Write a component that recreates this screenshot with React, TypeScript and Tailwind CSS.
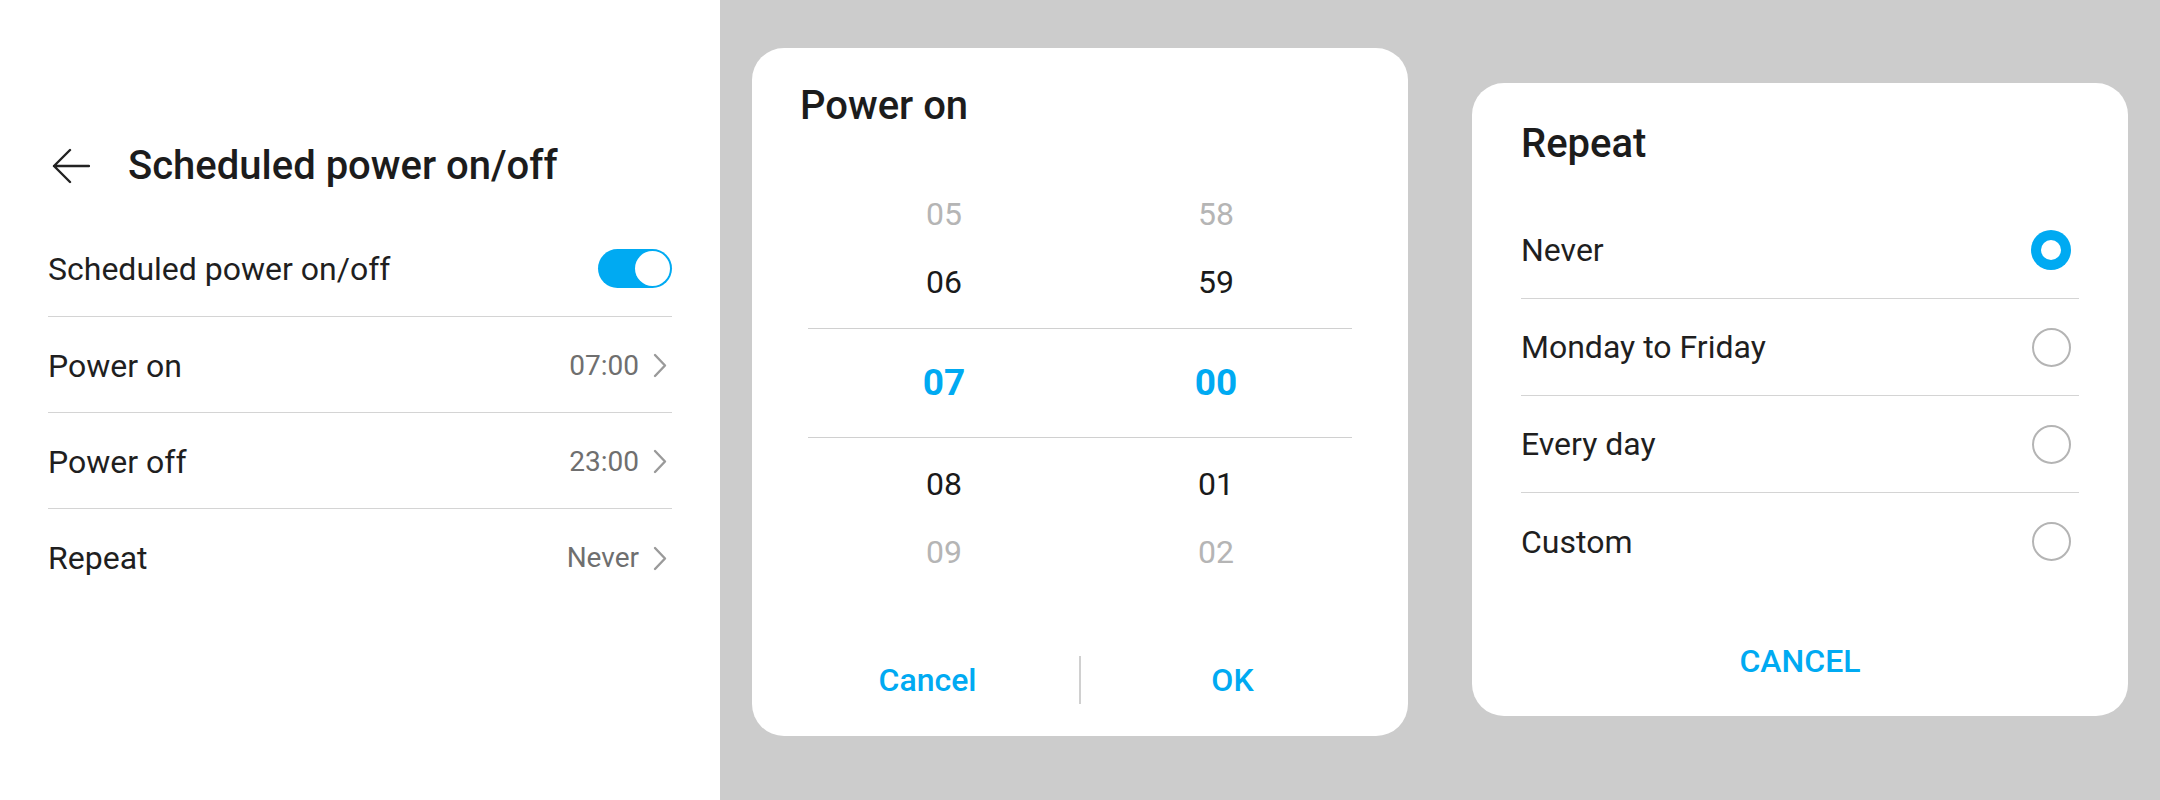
import React from "react";

const BLUE = "text-[#00aaf2]";

function Chevron() {
  return (
    <svg width="14" height="25" viewBox="0 0 14 25" className="ml-[14px] mr-[5px]">
      <path d="M2 2 L12 12.5 L2 23" fill="none" stroke="#9a9a9a" strokeWidth="2.4" strokeLinecap="round" strokeLinejoin="round" />
    </svg>
  );
}

function SettingRow({ label, value, last }: { label: string; value?: string; last?: boolean }) {
  return (
    <div className={`flex items-center h-[96px] ${last ? "" : "border-b border-[#d4d4d4]"}`}>
      <span className="text-[32px] text-[#1f1f1f] flex-1 pt-[2px]">{label}</span>
      {value !== undefined && (
        <div className="flex items-center pt-[2px]">
          <span className="text-[28px] text-[#6f6f6f]">{value}</span>
          <Chevron />
        </div>
      )}
    </div>
  );
}

function PickerRow({ h, m, tone }: { h: string; m: string; tone: "faded" | "normal" }) {
  const c = tone === "faded" ? "text-[#b5b5b5]" : "text-[#1a1a1a]";
  return (
    <div className={`flex h-[68px] items-center text-[32px] leading-[68px] ${c}`}>
      <div className="flex-1 text-center">{h}</div>
      <div className="flex-1 text-center">{m}</div>
    </div>
  );
}

function Radio({ selected }: { selected?: boolean }) {
  if (selected) {
    return (
      <div className="w-[40px] h-[40px] rounded-full bg-[#00aaf2] flex items-center justify-center mr-[8px]">
        <div className="w-[20px] h-[20px] rounded-full bg-white" />
      </div>
    );
  }
  return <div className="w-[39px] h-[39px] rounded-full border-[2px] border-[#b4b4b4] mr-[8px]" />;
}

function OptionRow({ label, selected, last }: { label: string; selected?: boolean; last?: boolean }) {
  return (
    <div className={`flex items-center h-[97px] ${last ? "" : "border-b border-[#d4d4d4]"}`}>
      <span className="flex-1 text-[32px] text-[#1f1f1f]">{label}</span>
      <Radio selected={selected} />
    </div>
  );
}

export default function App() {
  return (
    <div className="flex w-[2160px] h-[800px] font-['Roboto',sans-serif] overflow-hidden">
      {/* Left settings panel */}
      <div className="w-[720px] h-full bg-white px-[48px] pt-[142px]">
        <div className="flex items-center h-[48px]">
          <svg width="38" height="36" viewBox="0 0 38 36" className="ml-[4px]">
            <path d="M37 18 H2 M18 2 L2 18 L18 34" fill="none" stroke="#222" strokeWidth="2.4" strokeLinecap="round" strokeLinejoin="round" />
          </svg>
          <h1 className="ml-[38px] text-[40px] font-medium text-[#1c1c1c] leading-[48px]">Scheduled power on/off</h1>
        </div>
        <div className="mt-[31px]">
          <div className="flex items-center h-[96px] border-b border-[#d4d4d4]">
            <span className="text-[32px] text-[#1f1f1f] flex-1">Scheduled power on/off</span>
            <div className="w-[74px] h-[39px] rounded-full bg-[#00aaf2] flex items-center justify-end px-[2px]">
              <div className="w-[35px] h-[35px] rounded-full bg-white" />
            </div>
          </div>
          <SettingRow label="Power on" value="07:00" />
          <SettingRow label="Power off" value="23:00" />
          <SettingRow label="Repeat" value="Never" last />
        </div>
      </div>

      {/* Gray area with dialogs */}
      <div className="flex-1 h-full bg-[#cccccc] flex items-start px-[32px] gap-[64px]">
        {/* Time picker dialog */}
        <div className="mt-[48px] w-[656px] bg-white rounded-[32px] pt-[34px] pb-[32px]">
          <div className="px-[48px] text-[40px] leading-[48px] font-medium text-[#1c1c1c]">Power on</div>
          <div className="mt-[50px] px-[56px]">
            <PickerRow h="05" m="58" tone="faded" />
            <PickerRow h="06" m="59" tone="normal" />
            <div className={`my-[12px] h-[110px] border-y border-[#d0d0d0] flex items-center text-[37px] font-bold ${BLUE}`}>
              <div className="flex-1 text-center">07</div>
              <div className="flex-1 text-center">00</div>
            </div>
            <PickerRow h="08" m="01" tone="normal" />
            <PickerRow h="09" m="02" tone="faded" />
          </div>
          <div className="mt-[70px] h-[48px] flex items-center px-[24px]">
            <div className={`flex-1 text-center text-[32px] font-medium ${BLUE}`}>Cancel</div>
            <div className="w-[2px] h-[48px] bg-[#d0d0d0]" />
            <div className={`flex-1 text-center text-[32px] font-medium ${BLUE}`}>OK</div>
          </div>
        </div>

        {/* Repeat dialog */}
        <div className="mt-[83px] w-[656px] bg-white rounded-[32px] pt-[37px] pb-[7px] px-[49px]">
          <div className="text-[40px] leading-[48px] font-medium text-[#1c1c1c]">Repeat</div>
          <div className="mt-[34px]">
            <OptionRow label="Never" selected />
            <OptionRow label="Monday to Friday" />
            <OptionRow label="Every day" />
            <OptionRow label="Custom" last />
          </div>
          <div className={`mt-[23px] h-[96px] flex items-center justify-center text-[32px] font-medium ${BLUE}`}>CANCEL</div>
        </div>
      </div>
    </div>
  );
}
